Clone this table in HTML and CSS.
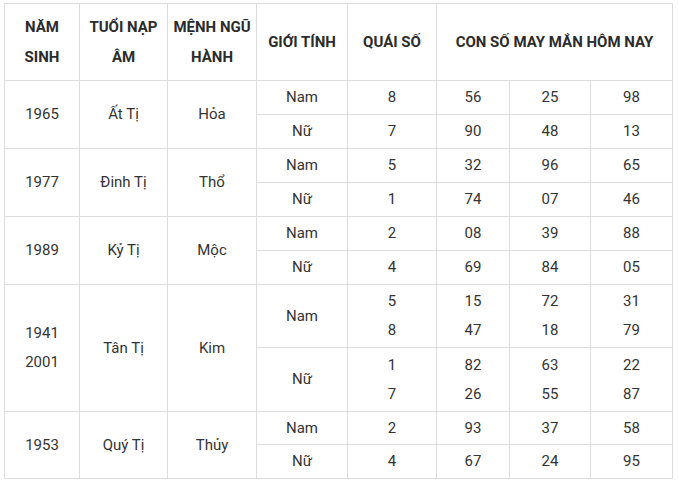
FILE: index.html
```html
<!DOCTYPE html>
<html lang="vi">
<head>
<meta charset="utf-8">
<title>Con số may mắn hôm nay</title>
<link rel="stylesheet" href="styles.css">
</head>
<body>
<table class="lucky">
  <colgroup>
    <col class="c1"><col class="c2"><col class="c3"><col class="c4"><col class="c5"><col class="c6"><col class="c7"><col class="c8">
  </colgroup>
  <thead>
    <tr class="head">
      <th>NĂM<br>SINH</th>
      <th>TUỔI NẠP<br>ÂM</th>
      <th>MỆNH NGŨ<br>HÀNH</th>
      <th>GIỚI TÍNH</th>
      <th>QUÁI SỐ</th>
      <th colspan="3">CON SỐ MAY MẮN HÔM NAY</th>
    </tr>
  </thead>
  <tbody>
    <tr class="r1"><td rowspan="2">1965</td><td rowspan="2">Ất Tị</td><td rowspan="2">Hỏa</td><td>Nam</td><td>8</td><td>56</td><td>25</td><td>98</td></tr>
    <tr class="r1"><td>Nữ</td><td>7</td><td>90</td><td>48</td><td>13</td></tr>
    <tr class="r1"><td rowspan="2">1977</td><td rowspan="2">Đinh Tị</td><td rowspan="2">Thổ</td><td>Nam</td><td>5</td><td>32</td><td>96</td><td>65</td></tr>
    <tr class="r1"><td>Nữ</td><td>1</td><td>74</td><td>07</td><td>46</td></tr>
    <tr class="r1"><td rowspan="2">1989</td><td rowspan="2">Kỷ Tị</td><td rowspan="2">Mộc</td><td>Nam</td><td>2</td><td>08</td><td>39</td><td>88</td></tr>
    <tr class="r1"><td>Nữ</td><td>4</td><td>69</td><td>84</td><td>05</td></tr>
    <tr class="r2a"><td rowspan="2">1941<br>2001</td><td rowspan="2">Tân Tị</td><td rowspan="2">Kim</td><td>Nam</td><td>5<br>8</td><td>15<br>47</td><td>72<br>18</td><td>31<br>79</td></tr>
    <tr class="r2b"><td>Nữ</td><td>1<br>7</td><td>82<br>26</td><td>63<br>55</td><td>22<br>87</td></tr>
    <tr class="r1s"><td rowspan="2">1953</td><td rowspan="2">Quý Tị</td><td rowspan="2">Thủy</td><td>Nam</td><td>2</td><td>93</td><td>37</td><td>58</td></tr>
    <tr class="r1"><td>Nữ</td><td>4</td><td>67</td><td>24</td><td>95</td></tr>
  </tbody>
</table>
</body>
</html>
```

FILE: styles.css
```css
html, body {
  background: #ffffff;
}
body {
  margin: 0;
  padding: 3px 0 0 4px;
  font-family: Roboto, "Liberation Sans", Arial, sans-serif;
  font-size: 15px;
  color: #333333;
}
.lucky {
  border-collapse: collapse;
  table-layout: fixed;
  width: 668px;
}
.c1 { width: 75px; }
.c2 { width: 88px; }
.c3 { width: 89px; }
.c4 { width: 91px; }
.c5 { width: 89px; }
.c6 { width: 73px; }
.c7 { width: 81px; }
.c8 { width: 82px; }
.lucky th,
.lucky td {
  border: 1px solid #dddddd;
  text-align: center;
  vertical-align: middle;
  padding: 0 4px;
}
.lucky th {
  font-weight: 700;
  line-height: 30px;
  color: #2b2b2b;
  height: 77px;
  box-sizing: border-box;
}
.lucky td {
  font-weight: 400;
  line-height: 29px;
}
.r1 td { height: 33px; }
.r1s td { height: 32px; }
.r2a td { height: 62px; }
.r2b td { height: 63px; }
.lucky tr td[rowspan] { height: auto; }
```
